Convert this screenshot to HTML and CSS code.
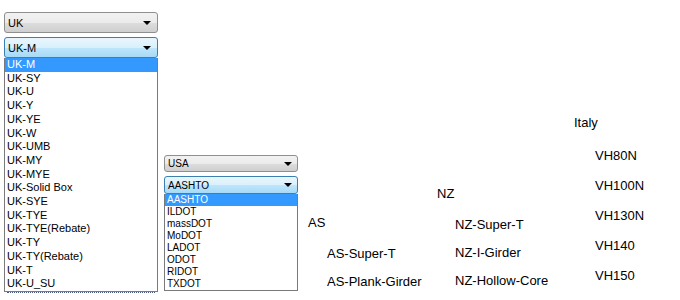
FILE: index.html
```html
<!DOCTYPE html>
<html lang="en">
<head>
    <meta charset="UTF-8">
    <title>Girder Library</title>
    <link rel="stylesheet" href="styles.css">
</head>
<body>
    <div class="canvas">
        <div class="picker picker-uk">
            <div class="combo">
                <span>UK</span>
                <span class="arrow"></span>
            </div>
            <div class="combo combo-open">
                <span>UK-M</span>
                <span class="arrow"></span>
            </div>
            <ul class="list">
                <li class="selected">UK-M</li>
                <li>UK-SY</li>
                <li>UK-U</li>
                <li>UK-Y</li>
                <li>UK-YE</li>
                <li>UK-W</li>
                <li>UK-UMB</li>
                <li>UK-MY</li>
                <li>UK-MYE</li>
                <li>UK-Solid Box</li>
                <li>UK-SYE</li>
                <li>UK-TYE</li>
                <li>UK-TYE(Rebate)</li>
                <li>UK-TY</li>
                <li>UK-TY(Rebate)</li>
                <li>UK-T</li>
                <li>UK-U_SU</li>
            </ul>
            <div class="focus-trail"></div>
        </div>

        <div class="picker picker-usa">
            <div class="combo">
                <span>USA</span>
                <span class="arrow"></span>
            </div>
            <div class="combo combo-open">
                <span>AASHTO</span>
                <span class="arrow"></span>
            </div>
            <ul class="list">
                <li class="selected">AASHTO</li>
                <li>ILDOT</li>
                <li>massDOT</li>
                <li>MoDOT</li>
                <li>LADOT</li>
                <li>ODOT</li>
                <li>RIDOT</li>
                <li>TXDOT</li>
            </ul>
        </div>

        <div class="group group-as">
            <div class="group-title">AS</div>
            <div class="group-item">AS-Super-T</div>
            <div class="group-item">AS-Plank-Girder</div>
        </div>

        <div class="group group-nz">
            <div class="group-title">NZ</div>
            <div class="group-item">NZ-Super-T</div>
            <div class="group-item">NZ-I-Girder</div>
            <div class="group-item">NZ-Hollow-Core</div>
        </div>

        <div class="group group-it">
            <div class="group-title">Italy</div>
            <div class="group-item">VH80N</div>
            <div class="group-item">VH100N</div>
            <div class="group-item">VH130N</div>
            <div class="group-item">VH140</div>
            <div class="group-item">VH150</div>
        </div>
    </div>
</body>
</html>
```

FILE: styles.css
```css
* {
    margin: 0;
    padding: 0;
    box-sizing: border-box;
}

body {
    font-family: 'Liberation Sans', Arial, sans-serif;
    background: white;
    color: #000;
    width: 680px;
    height: 300px;
    overflow: hidden;
}

.canvas {
    display: flex;
    align-items: flex-start;
}

/* dropdown pickers */

.picker {
    display: flex;
    flex-direction: column;
}

.picker-uk {
    width: 154px;
    margin-left: 4px;
    margin-top: 12px;
    font-size: 11px;
}

.picker-usa {
    width: 134px;
    margin-left: 6px;
    margin-top: 155px;
    font-size: 10px;
}

.combo {
    display: flex;
    align-items: center;
    justify-content: space-between;
    height: 21px;
    padding: 0 6px 0 3px;
    border: 1px solid #8e8f8f;
    border-radius: 3px;
    background: linear-gradient(#f2f2f2 0%, #ebebeb 50%, #dddddd 51%, #cfcfcf 100%);
    margin-bottom: 4px;
}

.combo-open {
    border-color: #3c7fb1;
    background: linear-gradient(#eaf6fd 0%, #d9f0fc 50%, #bee6fd 51%, #a7d9f5 100%);
    margin-bottom: 0;
}

.picker-usa .combo {
    height: 17px;
    padding-right: 5px;
}

.picker-usa .combo-open {
    height: 18px;
}

.arrow {
    width: 0;
    height: 0;
    border-left: 4px solid transparent;
    border-right: 4px solid transparent;
    border-top: 4px solid #000;
}

.list {
    list-style: none;
    border: 1px solid #7a7a7a;
    border-top: none;
    background: white;
}

.list li {
    padding-left: 2px;
    line-height: 13.7px;
    white-space: nowrap;
}

.picker-usa .list li {
    line-height: 12px;
}

.list .selected {
    background: #3399ff;
    color: white;
}

.focus-trail {
    height: 2px;
    margin: 0 3px;
    border-top: 1px dotted #4a5784;
}

/* label groups */

.group {
    display: flex;
    flex-direction: column;
    gap: 12px;
    font-size: 13px;
    line-height: 16px;
}

.group-item {
    padding-left: 19px;
    white-space: nowrap;
}

.group-title + .group-item {
    margin-top: 3px;
}

.group-as {
    width: 129px;
    margin-left: 10px;
    margin-top: 215px;
}

.group-nz {
    width: 137px;
    margin-top: 186px;
}

.group-nz .group-item {
    padding-left: 18px;
}

.group-it {
    margin-top: 115px;
    gap: 14px;
}

.group-it .group-item {
    padding-left: 21px;
}
```
